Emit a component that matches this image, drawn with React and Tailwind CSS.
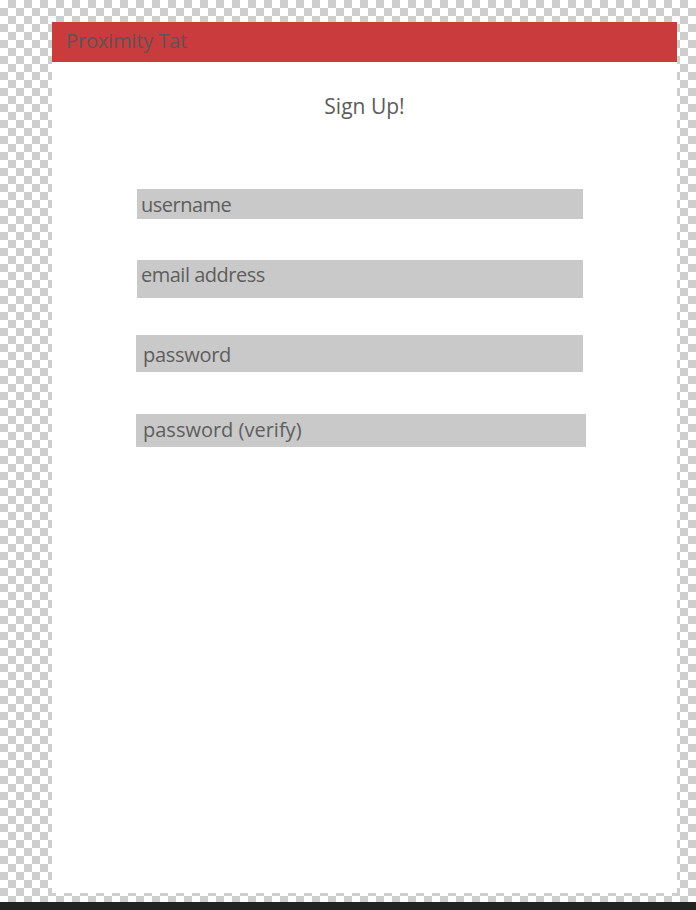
import React from 'react';

const fields = [
  { label: 'username', box: 'ml-[85px] mt-[69px] w-[446px] h-[30px] pl-[4px] pt-[2px]', track: 'tracking-[-0.5px]' },
  { label: 'email address', box: 'ml-[85px] mt-[41px] w-[446px] h-[38px] pl-[4px] pt-[1px]', track: 'tracking-[-0.5px]' },
  { label: 'password', box: 'ml-[84px] mt-[37px] w-[447px] h-[37px] pl-[7px] pt-[6px]', track: 'tracking-[-0.3px]' },
  { label: 'password (verify)', box: 'ml-[84px] mt-[42px] w-[450px] h-[33px] pl-[7px] pt-[2px]', track: 'tracking-[0px]' },
];

function App() {
  return (
    <div className="w-[696px] h-[910px] flex flex-col bg-[repeating-conic-gradient(#cecece_0_25%,#ffffff_0_50%)] bg-[length:16px_16px] font-['Open_Sans',sans-serif]">
      {/* Sheet */}
      <div className="ml-[52px] mt-[22px] w-[625px] h-[871px] bg-white flex flex-col">
        {/* Header */}
        <div className="h-[40px] bg-[#c93b3c] pl-[14px] pt-[5px]">
          <span className="text-[20px] leading-[28px] tracking-[-0.15px] text-[#5b5556]">Proximity Tat</span>
        </div>

        <h1 className="mt-[30px] text-center text-[21px] leading-[28px] text-[#5c5c5c]">Sign Up!</h1>

        {fields.map((f) => (
          <div key={f.label} className={`${f.box} bg-[#c9c9c9]`}>
            <span className={`${f.track} text-[20px] leading-[28px] text-[#5e5e5e] whitespace-nowrap`}>
              {f.label}
            </span>
          </div>
        ))}
      </div>

      {/* Bottom bar */}
      <div className="mt-auto h-[8px] bg-[#232323]"></div>
    </div>
  );
}

export default App;
